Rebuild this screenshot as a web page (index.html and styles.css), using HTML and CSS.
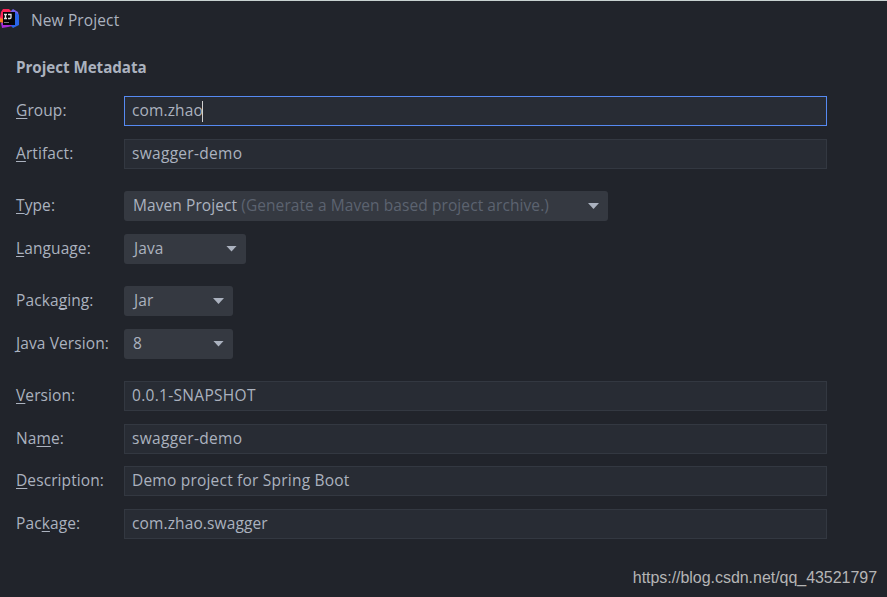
FILE: index.html
```
<!DOCTYPE html>
<html lang="en">
<head>
<meta charset="utf-8">
<title>New Project</title>
<link rel="stylesheet" href="styles.css">
</head>
<body>
<div class="window">
  <header class="titlebar">
    <svg class="logo" width="20" height="20" viewBox="0 0 20 20" aria-hidden="true">
      <path fill="#f97b24" d="M0 8l5-1v8l-5-2z"/>
      <path fill="#fc2558" d="M1 3l2-3h6l3 3 1 3-4 3-5 1-4-1z"/>
      <path fill="#7560e8" d="M10 3l3-3 5 3 1 5-3 4-4-7z"/>
      <path fill="#2a65e8" d="M15 3l4 3v10l-6 3-3-3z"/>
      <path fill="#a62bd8" d="M1 14l5-1 6 4-4 1-6 1z"/>
      <path fill="#050507" d="M3 3h12v13H3z"/>
      <path fill="none" stroke="#e4e4e4" stroke-width="1.3" d="M4 5.5h3M5.5 5v5M4 9.5h3M8 5.5h3v3q0 1-1 1H8"/>
      <path fill="#777" d="M4 13h5v1H4z"/>
    </svg>
    <span class="title">New Project</span>
  </header>
  <h1 class="heading">Project Metadata</h1>
  <form class="form">
    <div class="row"><label><u>G</u>roup:</label><div class="field focused"><span class="domain">com.zhao</span><i class="caret"></i></div></div>
    <div class="row end"><label><u>A</u>rtifact:</label><div class="field"><span>swagger-demo</span></div></div>
    <div class="row"><label><u>T</u>ype:</label><div class="combo wide"><span>Maven Project <em>(Generate a Maven based project archive.)</em></span><i class="arrow"></i></div></div>
    <div class="row end"><label><u>L</u>anguage:</label><div class="combo medium"><span class="inset">Java</span><i class="arrow"></i></div></div>
    <div class="row"><label>Packa<u>g</u>ing:</label><div class="combo"><span class="inset">Jar</span><i class="arrow"></i></div></div>
    <div class="row end"><label><u>J</u>ava Version:</label><div class="combo"><span>8</span><i class="arrow"></i></div></div>
    <div class="row"><label><u>V</u>ersion:</label><div class="field"><span>0.0.1-SNAPSHOT</span></div></div>
    <div class="row"><label>Na<u>m</u>e:</label><div class="field"><span>swagger-demo</span></div></div>
    <div class="row"><label><u>D</u>escription:</label><div class="field"><span class="sentence">Demo project for Spring Boot</span></div></div>
    <div class="row"><label>Pac<u>k</u>age:</label><div class="field"><span class="domain">com.zhao.swagger</span></div></div>
  </form>
  <footer class="source">https://blog.csdn.net/qq_43521797</footer>
</div>
</body>
</html>
```
FILE: styles.css
```
* { box-sizing: border-box; }
body { margin: 0; background: #21242b; }
.window {
  height: 597px;
  border-top: 1px solid #c8d2d1;
  color: #abb2bf;
  font: 15.5px/20px "Open Sans", "Noto Sans", sans-serif;
  display: flex;
  flex-direction: column;
  overflow: hidden;
}
.titlebar { height: 38px; display: flex; align-items: center; gap: 11px; flex: none; }
.logo { margin-top: -2px; }
.title { letter-spacing: 0.12px; padding-bottom: 1px; }
.heading { margin: 18px 0 0 16px; font-size: 15.2px; line-height: 20px; font-weight: 700; letter-spacing: -0.05px; white-space: nowrap; }
.form { margin: 19px 60px 0 16px; display: flex; flex-direction: column; gap: 12.6px; }
.row { display: flex; height: 30px; align-items: center; flex: none; }
.row.end { margin-bottom: 9.8px; }
label { width: 108px; flex: none; white-space: nowrap; padding-bottom: 2px; letter-spacing: 0.1px; }
u { text-decoration-thickness: 1px; text-underline-offset: 2px; text-decoration-skip-ink: none; }
.field, .combo { height: 30px; display: flex; align-items: center; white-space: nowrap; }
.field span, .combo span { padding-bottom: 2px; }
.field { flex: 1; padding-left: 7px; background: #282c34; border: 1px solid #333841; letter-spacing: 0.3px; }
.field .domain { letter-spacing: 0.12px; }
.field .sentence { letter-spacing: 0.21px; }
.focused { border-color: #568af2; }
.caret { width: 1px; height: 21px; margin-left: -1px; background: #d0d0d0; }
.combo { width: 109px; padding: 0 9px; justify-content: space-between; background: #353941; border-radius: 3px; letter-spacing: 0.08px; }
.combo .inset { padding-left: 1px; }
.wide { width: 484px; }
.medium { width: 122px; }
.combo em { font-style: normal; color: #5c6370; }
.arrow { width: 11px; height: 6px; background: #abb2bf; clip-path: polygon(0 0, 100% 0, 50% 100%); }
.source { margin: 29px 10px 0 0; text-align: right; color: #b5b5b5; font: 16px/20px "Liberation Sans", sans-serif; letter-spacing: -0.04px; }
```
